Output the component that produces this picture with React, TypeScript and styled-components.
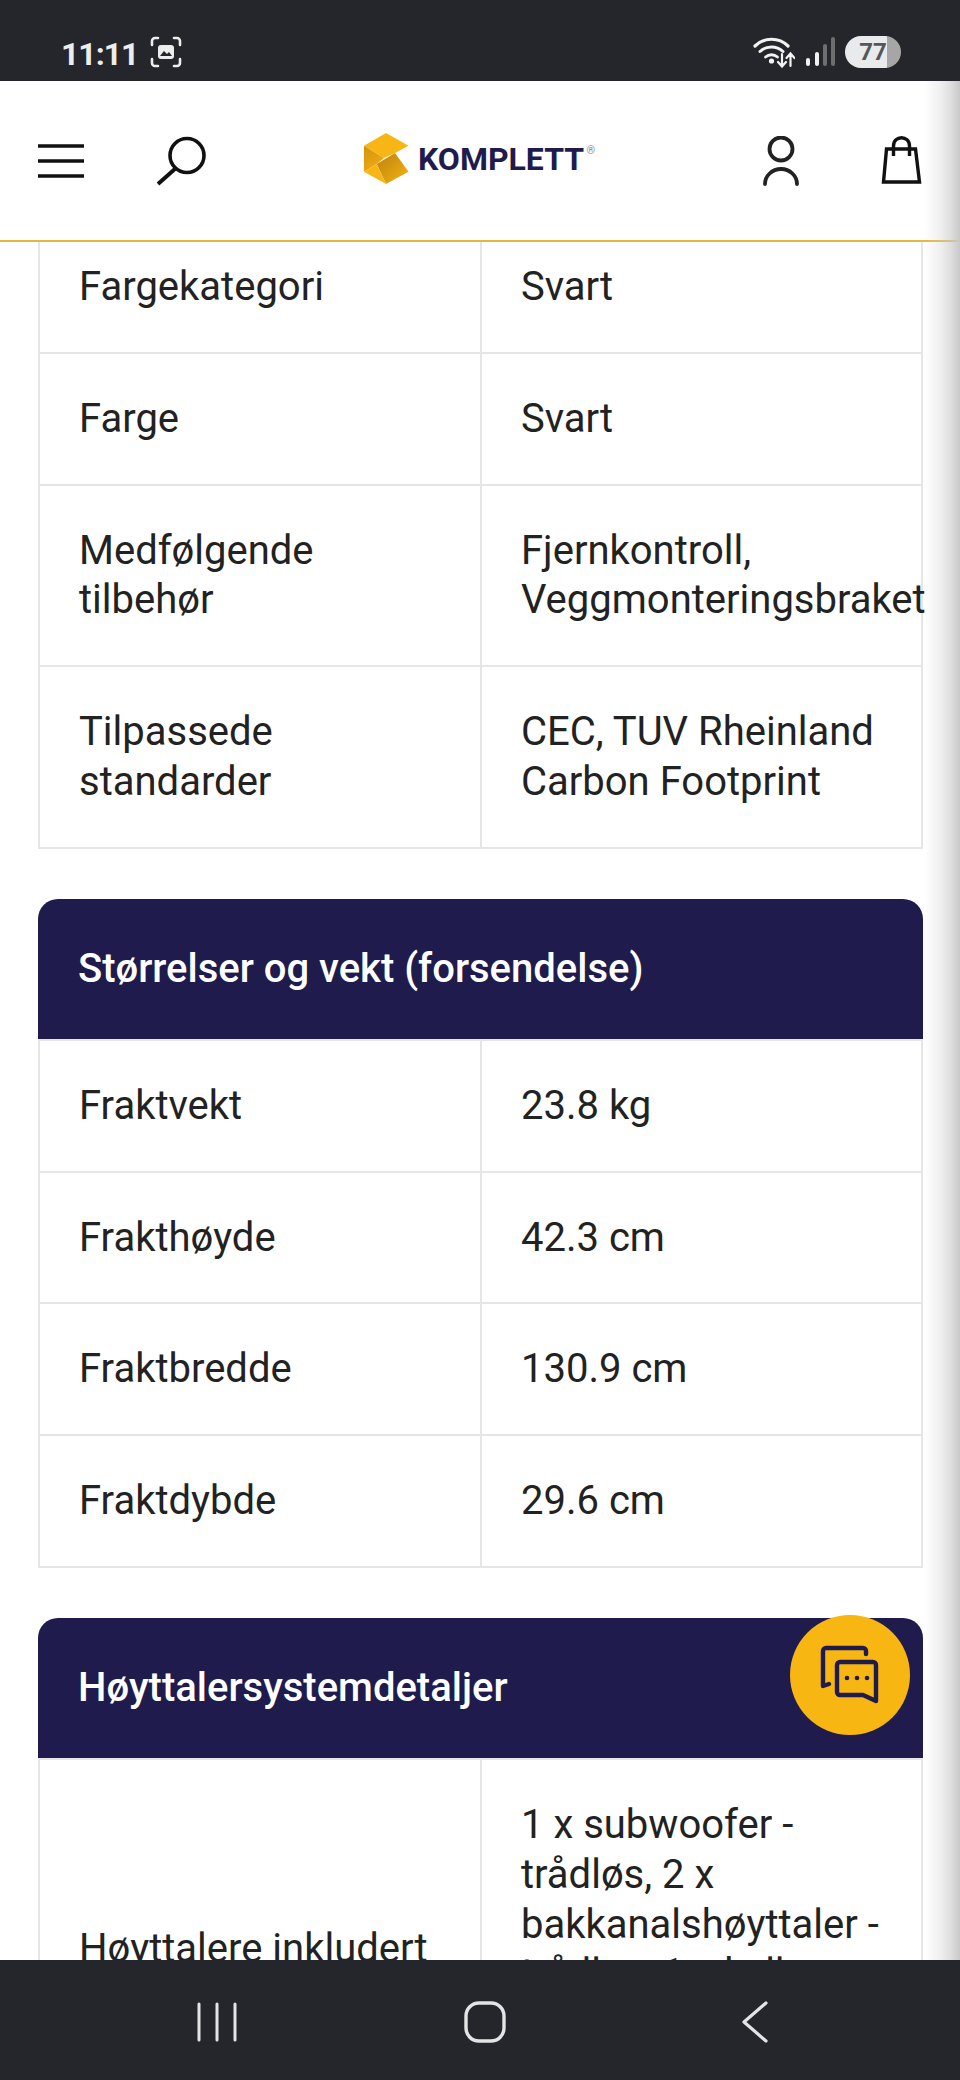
import React from 'react';
import styled, { createGlobalStyle } from 'styled-components';

const GlobalStyle = createGlobalStyle`
  html, body {
    margin: 0;
    padding: 0;
    background: #fff;
  }
  * {
    box-sizing: border-box;
  }
`;

const Phone = styled.div`
  position: relative;
  width: 960px;
  height: 2080px;
  display: flex;
  flex-direction: column;
  overflow: hidden;
  font-family: Roboto, "Liberation Sans", sans-serif;
  color: #222;
`;

const StatusBar = styled.div`
  height: 81px;
  flex: none;
  background: #25262b;
  display: flex;
  align-items: flex-end;
  justify-content: space-between;
  padding: 0 59px 13px 61px;
`;

const StatusGroup = styled.div`
  display: flex;
  align-items: center;
  gap: 10px;
`;

const Clock = styled.span`
  font-size: 32px;
  line-height: 32px;
  font-weight: 700;
  color: #eceded;
  letter-spacing: -1px;
  margin-bottom: -4px;
  margin-right: 2px;
`;

const Battery = styled.div`
  width: 56px;
  height: 32px;
  border-radius: 16px;
  background: linear-gradient(90deg, #e9eaec 0 75%, #a6a6a6 75% 100%);
  color: #55565a;
  font-size: 24px;
  line-height: 33px;
  font-weight: 700;
  text-align: center;
`;

const Header = styled.header`
  height: 161px;
  flex: none;
  background: #fff;
  border-bottom: 2px solid #e5b840;
  display: grid;
  grid-template-columns: 1fr auto 1fr;
  align-items: center;
  padding: 0 38px;
  position: relative;
  z-index: 1;
`;

const HeaderSide = styled.div<{ $end?: boolean }>`
  display: flex;
  align-items: center;
  justify-content: ${p => (p.$end ? 'flex-end' : 'flex-start')};
  gap: ${p => (p.$end ? '81px' : '72px')};
`;

const Logo = styled.div`
  display: flex;
  align-items: center;
  gap: 9px;
  margin: 0 12px 4px 0;
`;

const LogoWord = styled.span`
  font-family: Roboto, sans-serif;
  font-size: 32px;
  line-height: 36px;
  font-weight: 700;
  color: #1f1b4d;
  letter-spacing: 0;
  position: relative;
`;

const LogoMark = styled.span`
  position: absolute;
  top: 4px;
  right: -11px;
  font-size: 11px;
  line-height: 11px;
  font-weight: 400;
  color: #888;
`;

const Content = styled.main`
  flex: 1;
  min-height: 0;
  overflow: hidden;
  padding: 0 37px 0 38px;
`;

const Sections = styled.div`
  margin-top: -22px;
  display: flex;
  flex-direction: column;
  gap: 50px;
`;

const SectionTitle = styled.h2`
  margin: 0;
  height: 140px;
  padding: 0 40px;
  display: flex;
  align-items: center;
  background: #1f1b4d;
  border-radius: 20px 20px 0 0;
  color: #fff;
  font-size: 40px;
  font-weight: 500;
`;

const SpecTable = styled.table`
  width: 885px;
  table-layout: fixed;
  border-collapse: collapse;
  font-size: 40px;
  line-height: 49.8px;

  td {
    border: 2px solid #e6e6e6;
    padding: 40px 0 40px 39px;
    vertical-align: middle;
    overflow: visible;
    white-space: pre-line;
  }
  td:first-child {
    width: 442px;
  }
`;

const ChatButton = styled.button`
  position: absolute;
  left: 790px;
  top: 1615px;
  width: 120px;
  height: 120px;
  border: 0;
  padding: 0;
  border-radius: 50%;
  background: #f7b612;
  display: flex;
  align-items: center;
  justify-content: center;
  z-index: 2;
`;

const EdgeShade = styled.div`
  position: absolute;
  top: 81px;
  right: 0;
  bottom: 120px;
  width: 36px;
  background: linear-gradient(90deg, rgba(200, 200, 200, 0) 0, rgba(200, 200, 200, 0.28) 45%, rgba(200, 200, 200, 0.6) 75%, rgba(200, 200, 200, 1) 100%);
  z-index: 3;
`;

const NavBar = styled.nav`
  height: 120px;
  flex: none;
  background: #25262b;
  display: flex;
  align-items: center;
  gap: 227px;
  position: relative;
  z-index: 4;
  padding: 3px 0 0 197px;
`;

const Glyph = styled.svg`
  display: block;
  flex: none;
`;

const BackGlyph = styled(Glyph)`
  margin-left: 8px;
`;

type Row = [string, string];

const generalRows: Row[] = [
  ['Fargekategori', 'Svart'],
  ['Farge', 'Svart'],
  ['Medfølgende\ntilbehør', 'Fjernkontroll,\nVeggmonteringsbraket'],
  ['Tilpassede\nstandarder', 'CEC, TUV Rheinland\nCarbon Footprint'],
];

const shippingRows: Row[] = [
  ['Fraktvekt', '23.8 kg'],
  ['Frakthøyde', '42.3 cm'],
  ['Fraktbredde', '130.9 cm'],
  ['Fraktdybde', '29.6 cm'],
];

const speakerRows: Row[] = [
  ['Høyttalere inkludert', '1 x subwoofer -\ntrådløs, 2 x\nbakkanalshøyttaler -\ntrådløs, 1 x hylle-\nenhet - trådløs,\nsoundbar'],
];

const Rows = ({ rows }: { rows: Row[] }) => (
  <SpecTable>
    <tbody>
      {rows.map(([label, value]) => (
        <tr key={label}>
          <td>{label}</td>
          <td>{value}</td>
        </tr>
      ))}
    </tbody>
  </SpecTable>
);

const App: React.FC = () => (
  <Phone>
    <GlobalStyle />
    <StatusBar>
      <StatusGroup>
        <Clock>11:11</Clock>
        <Glyph width="32" height="32" viewBox="0 0 32 32" fill="none" stroke="#eceded" strokeWidth="2.6" strokeLinecap="round">
          <path d="M2 9V5a3 3 0 0 1 3-3h3M24 2h3a3 3 0 0 1 3 3v4M30 23v4a3 3 0 0 1-3 3h-3M8 30H5a3 3 0 0 1-3-3v-4" />
          <rect x="8" y="9" width="16" height="14" rx="3" fill="#eceded" stroke="none" />
          <path d="M10 20l4-5 3 3 2-2 3 4z" fill="#25262b" stroke="none" />
        </Glyph>
      </StatusGroup>
      <StatusGroup>
        <Glyph width="46" height="32" viewBox="0 0 46 32" fill="none" stroke="#f2f2f2" strokeLinecap="round">
          <path d="M6 10C15 1 30 1 39 10" strokeWidth="3.2" />
          <path d="M11 15.500C17.500 9.500 27.500 9.500 34 15.500" strokeWidth="3" />
          <path d="M16.500 21c3.500-3 8.500-3 12 0" strokeWidth="2.800" />
          <circle cx="22.500" cy="25" r="2.600" fill="#f2f2f2" stroke="none" />
          <path d="M33 18v12M29 26l4 4.500 4-4.500M41.500 30V18M37.500 22l4-4.500 4 4.500" strokeWidth="2.200" />
        </Glyph>
        <Glyph width="30" height="32" viewBox="0 0 30 32" strokeLinecap="round" fill="none">
          <path d="M3 24v4" stroke="#f2f2f2" strokeWidth="4" />
          <path d="M12 18v10" stroke="#f2f2f2" strokeWidth="4" />
          <path d="M20 10v18" stroke="#6d6e70" strokeWidth="4" />
          <path d="M28 3v25" stroke="#6d6e70" strokeWidth="4" />
        </Glyph>
        <Battery>77</Battery>
      </StatusGroup>
    </StatusBar>

    <Header>
      <HeaderSide>
        <Glyph width="46" height="36" viewBox="0 0 46 36" stroke="#111" strokeWidth="3.600">
          <path d="M0 3h46M0 18h46M0 33h46" />
        </Glyph>
        <Glyph width="50" height="50" viewBox="0 0 50 50" fill="none" stroke="#111" strokeWidth="3.600">
          <circle cx="31" cy="19.500" r="17" />
          <path d="M20 32L2 48" strokeWidth="4" />
        </Glyph>
      </HeaderSide>
      <Logo>
        <Glyph width="45" height="52" viewBox="0 0 45 52">
          <defs>
            <linearGradient id="logoLeft" x1="0" y1="0" x2="0.6" y2="1">
              <stop offset="0" stopColor="#d2930e" />
              <stop offset="1" stopColor="#f0ab14" />
            </linearGradient>
            <linearGradient id="logoFold" x1="0" y1="0" x2="1" y2="1">
              <stop offset="0" stopColor="#bd820c" />
              <stop offset="1" stopColor="#f6b315" />
            </linearGradient>
          </defs>
          <path d="M22 0L44.500 12.700 31 20 20 25 0 12.700z" fill="#f8b616" />
          <path d="M0 12.700L20 25 12.700 31 0 38.700z" fill="url(#logoLeft)" />
          <path d="M31 20L44.500 38.700 22 51 12.700 31z" fill="url(#logoFold)" />
          <path d="M0 38.700L12.700 31 22 51z" fill="#f8b616" />
        </Glyph>
        <LogoWord>
          KOMPLETT
          <LogoMark>®</LogoMark>
        </LogoWord>
      </Logo>
      <HeaderSide $end>
        <Glyph width="36" height="50" viewBox="0 0 36 50" fill="none" stroke="#222" strokeWidth="3.800" strokeLinecap="round">
          <circle cx="18" cy="13" r="11.500" />
          <path d="M2 48c0-8 7-15 16-15s16 7 16 15" />
        </Glyph>
        <Glyph width="42" height="50" viewBox="0 0 42 50" fill="none" stroke="#111" strokeWidth="3.400">
          <path d="M6.500 13h29L39.500 46H3.500z" />
          <path d="M13.500 20V10c0-11 16-11 16 0v10" />
        </Glyph>
      </HeaderSide>
    </Header>

    <Content>
      <Sections>
        <Rows rows={generalRows} />
        <section>
          <SectionTitle>Størrelser og vekt (forsendelse)</SectionTitle>
          <Rows rows={shippingRows} />
        </section>
        <section>
          <SectionTitle>Høyttalersystemdetaljer</SectionTitle>
          <Rows rows={speakerRows} />
        </section>
      </Sections>
    </Content>

    <ChatButton aria-label="Chat">
      <Glyph width="62" height="62" viewBox="0 0 62 62" fill="none" stroke="#1f1b4d" strokeWidth="4.400" strokeLinejoin="round" strokeLinecap="round">
        <path d="M47 10V7a3 3 0 0 0-3-3H7a3 3 0 0 0-3 3v35l6-2" />
        <path d="M21 18h33a3 3 0 0 1 3 3v36l-13-6H21a3 3 0 0 1-3-3V21a3 3 0 0 1 3-3z" />
        <circle cx="28" cy="34" r="2.300" fill="#1f1b4d" stroke="none" />
        <circle cx="38" cy="34" r="2.300" fill="#1f1b4d" stroke="none" />
        <circle cx="48" cy="34" r="2.300" fill="#1f1b4d" stroke="none" />
      </Glyph>
    </ChatButton>

    <EdgeShade />

    <NavBar>
      <Glyph width="40" height="40" viewBox="0 0 40 40" stroke="#e3e4e5" strokeWidth="3" strokeLinecap="round">
        <path d="M2 2v36M20 2v36M38 2v36" />
      </Glyph>
      <Glyph width="42" height="42" viewBox="0 0 42 42" fill="none" stroke="#e3e4e5" strokeWidth="3.400">
        <rect x="2" y="2" width="38" height="38" rx="13" />
      </Glyph>
      <BackGlyph width="28" height="42" viewBox="0 0 28 42" fill="none" stroke="#e3e4e5" strokeWidth="3.200" strokeLinecap="round" strokeLinejoin="round">
        <path d="M25 2L3 21l22 19" />
      </BackGlyph>
    </NavBar>
  </Phone>
);

export default App;
